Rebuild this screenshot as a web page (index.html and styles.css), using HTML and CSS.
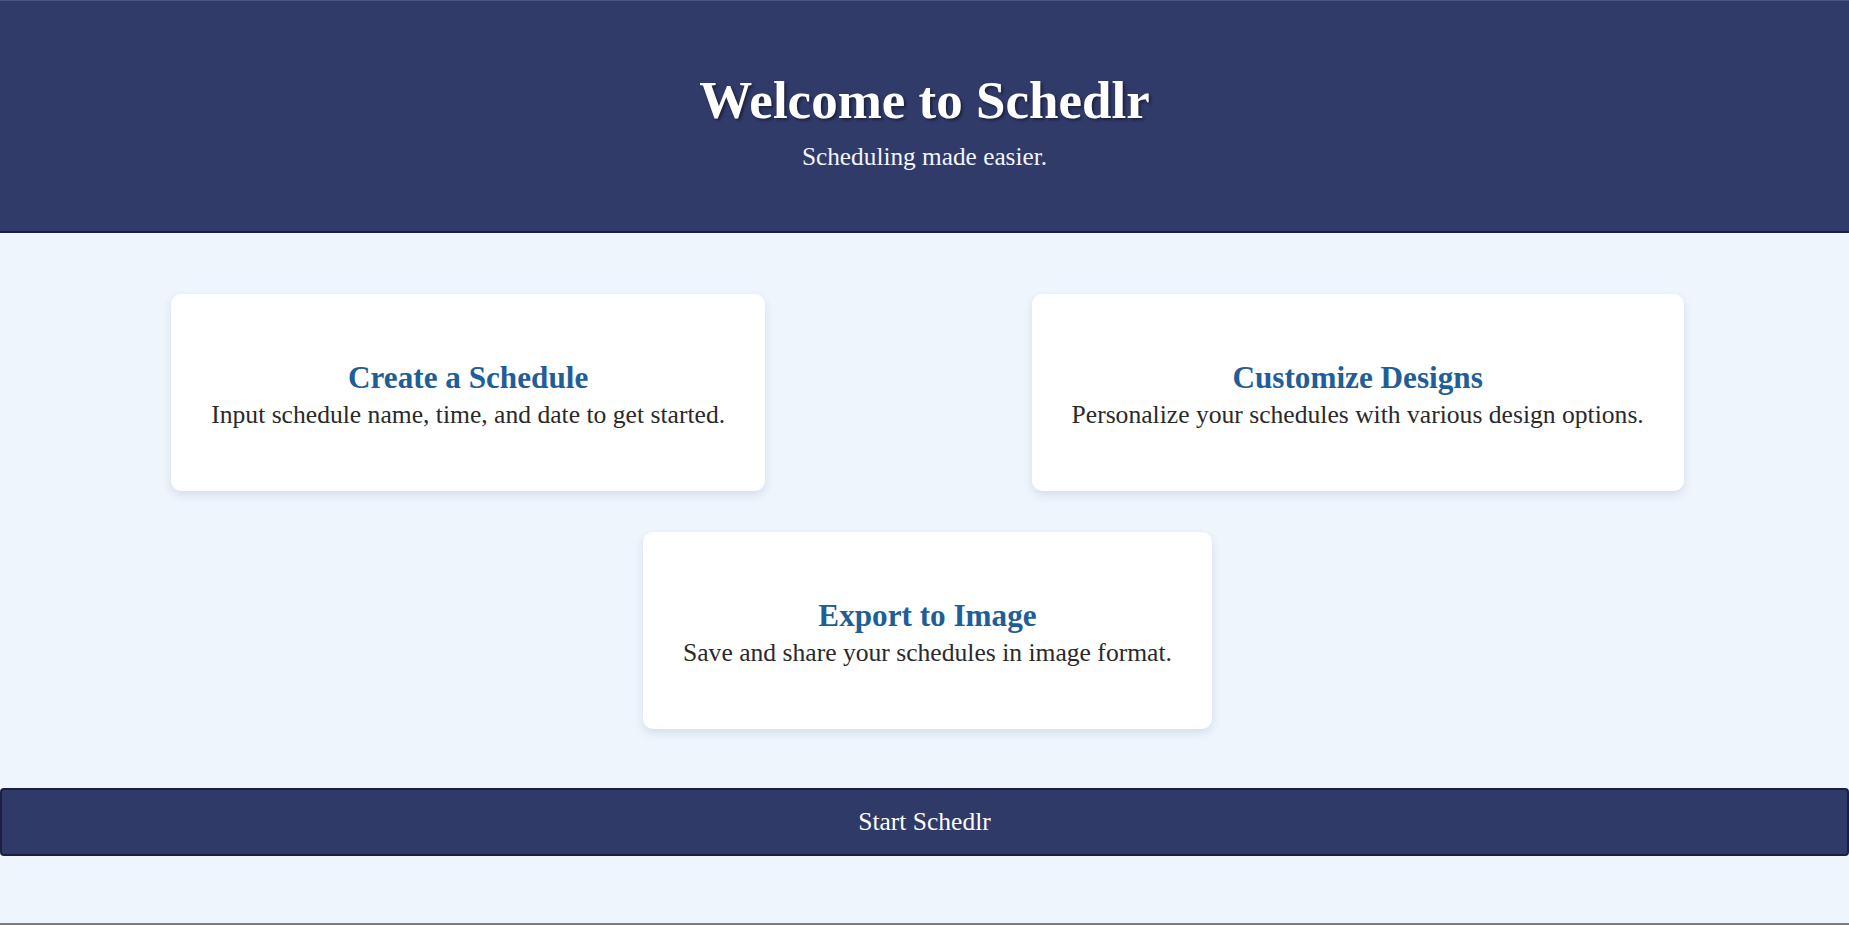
FILE: index.html
```html
<!DOCTYPE html>
<html lang="en">
<head>
<meta charset="utf-8">
<title>Schedlr</title>
<link rel="stylesheet" href="styles.css">
</head>
<body>
<div class="page">
  <header class="hero">
    <h1 class="hero-title">Welcome to Schedlr</h1>
    <p class="hero-sub">Scheduling made easier.</p>
  </header>
  <main class="features">
    <div class="row">
      <section class="card">
        <h2 class="card-title">Create a Schedule</h2>
        <p class="card-text">Input schedule name, time, and date to get started.</p>
      </section>
      <section class="card">
        <h2 class="card-title">Customize Designs</h2>
        <p class="card-text">Personalize your schedules with various design options.</p>
      </section>
    </div>
    <div class="row">
      <section class="card">
        <h2 class="card-title">Export to Image</h2>
        <p class="card-text">Save and share your schedules in image format.</p>
      </section>
    </div>
  </main>
  <button class="start" type="button">Start Schedlr</button>
</div>
</body>
</html>
```
FILE: styles.css
```css
* { box-sizing: border-box; }
html, body { margin: 0; padding: 0; }
body {
  background: #eef5fd;
  font-family: "Liberation Serif", "Times New Roman", serif;
  color: #2a2a2a;
}
.page {
  height: 925px;
  border-bottom: 2px solid #7c7c7c;
  display: flex;
  flex-direction: column;
}
.hero {
  height: 233px;
  background: #313b6a;
  border-bottom: 2px solid #1b2142;
  border-top: 1px solid #4a5482;
  display: flex;
  flex-direction: column;
  align-items: center;
  padding-top: 69px;
  color: #fff;
}
.hero-title {
  margin: 0;
  font-size: 53px;
  font-weight: bold;
  line-height: normal;
  text-shadow: 2px 2px 3px rgba(0, 0, 0, 0.45);
}
.hero-sub {
  margin: 12px 0 0;
  font-size: 25.3px;
  line-height: normal;
  color: #f2f4fa;
}
.features {
  padding: 61px 32px 0 38px;
  display: flex;
  flex-direction: column;
  gap: 41px;
}
.row {
  display: flex;
  justify-content: space-around;
}
.card {
  background: #fff;
  border-radius: 10px;
  box-shadow: 0 4px 10px rgba(40, 60, 100, 0.12);
  padding: 66px 40px 61px;
  text-align: center;
}
.card-title {
  margin: 0;
  font-size: 31.2px;
  line-height: 36px;
  font-weight: bold;
  color: #1f5e97;
}
.card-text {
  margin: 4px 0 0;
  font-size: 25.6px;
  line-height: 30px;
  color: #2a2a2a;
}
.start {
  margin-top: 59px;
  width: 100%;
  height: 68px;
  background: #303a68;
  color: #fff;
  border: 2px solid #1b1f3d;
  border-radius: 4px;
  font-family: "Liberation Serif", "Times New Roman", serif;
  font-size: 25.5px;
  padding: 0;
}
```
